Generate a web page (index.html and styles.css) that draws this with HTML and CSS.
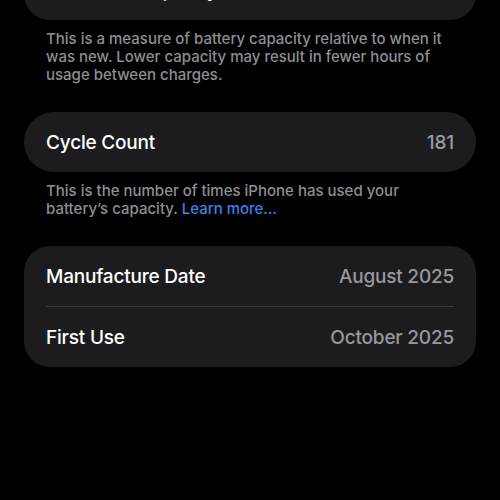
FILE: index.html
```html
<!DOCTYPE html>
<html>
<head>
<meta charset="utf-8">
<link rel="stylesheet" href="styles.css">
</head>
<body>
<main class="screen">
  <section class="group">
    <div class="card">
      <div class="row"><span class="label">Maximum Capacity</span><span class="value">95%</span></div>
    </div>
    <p class="footer">This is a measure of battery capacity relative to when it was new. Lower capacity may result in fewer hours of usage between charges.</p>
  </section>
  <section class="group">
    <div class="card pill">
      <div class="row"><span class="label">Cycle Count</span><span class="value">181</span></div>
    </div>
    <p class="footer">This is the number of times iPhone has used your battery’s capacity. <a class="link" href="#">Learn more…</a></p>
  </section>
  <section class="group">
    <div class="card">
      <div class="row"><span class="label">Manufacture Date</span><span class="value">August 2025</span></div>
      <div class="sep"></div>
      <div class="row"><span class="label">First Use</span><span class="value">October 2025</span></div>
    </div>
  </section>
</main>
</body>
</html>
```
FILE: styles.css
```css
html, body {
  margin: 0;
  padding: 0;
  background: #000;
}
body {
  width: 500px;
  height: 500px;
  overflow: hidden;
  font-family: Inter, "Noto Sans", sans-serif;
  -webkit-font-smoothing: antialiased;
}
.screen {
  margin-top: -40px;
  padding: 0 24px;
  display: flex;
  flex-direction: column;
  gap: 28px;
}
.group {
  display: flex;
  flex-direction: column;
}
.card {
  background: #1c1c1e;
  border-radius: 26px;
  display: flex;
  flex-direction: column;
}
.card.pill {
  border-radius: 30px;
}
.row {
  height: 60px;
  padding: 0 22px;
  display: flex;
  align-items: center;
  justify-content: space-between;
}
.label {
  color: #fff;
  font-size: 19px;
  font-weight: 500;
  letter-spacing: -0.2px;
}
.value {
  color: #98989e;
  font-size: 19px;
  font-weight: 500;
  letter-spacing: -0.2px;
}
.sep {
  height: 1px;
  background: #38383a;
  margin: 0 22px;
}
.footer {
  margin: 0;
  padding: 10px 22px 0;
  color: #8e8e93;
  font-size: 15px;
  font-weight: 500;
  line-height: 18px;
}
.link {
  color: #3b82e8;
  text-decoration: none;
}
```
